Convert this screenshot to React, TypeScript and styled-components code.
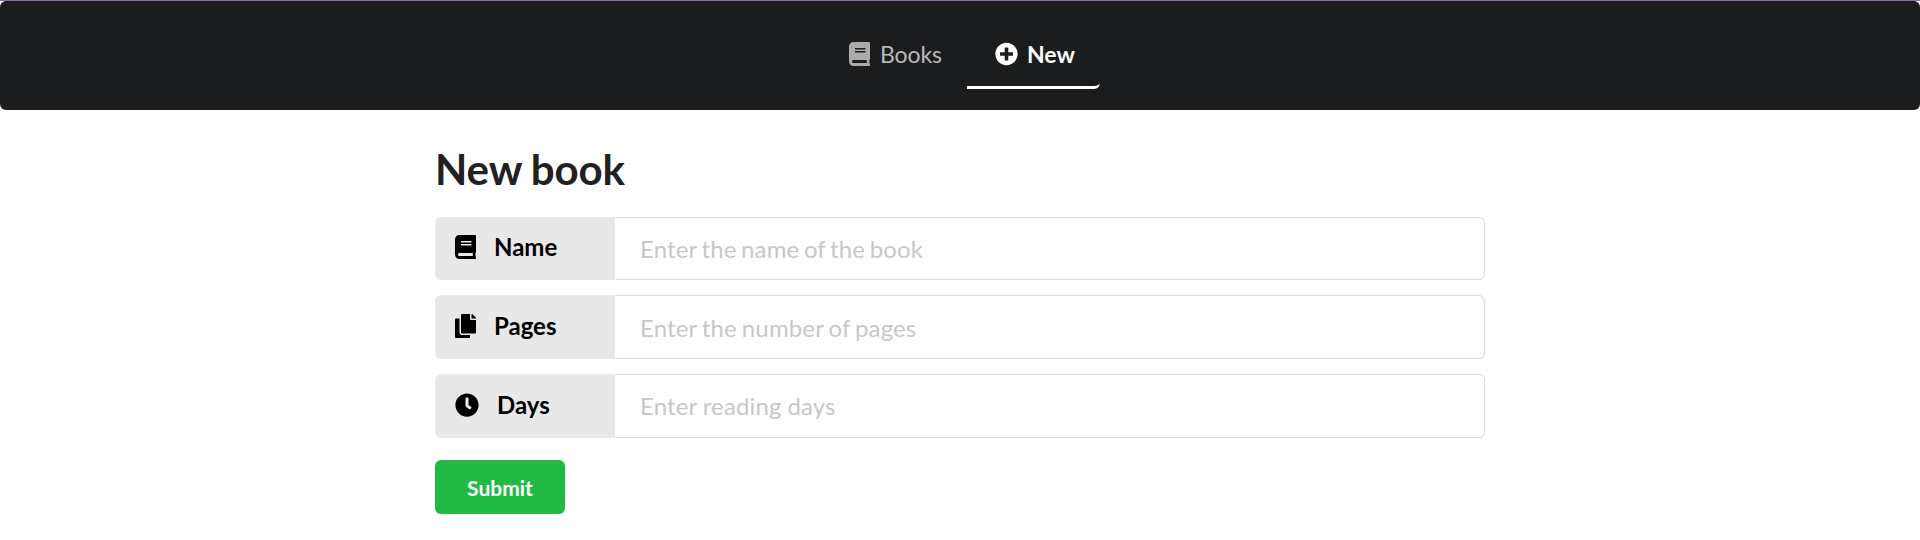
import React from "react";
import styled, { createGlobalStyle, css } from "styled-components";
import { FaBook, FaClock, FaCopy, FaPlusCircle } from "react-icons/fa";

const GlobalStyle = createGlobalStyle`
  *, *::before, *::after { box-sizing: border-box; }
  body {
    margin: 0;
    background: #fff;
    font-family: Lato, "Liberation Sans", sans-serif;
    color: #212121;
  }
  input, button { font-family: inherit; }
`;

const Page = styled.div`
  min-height: 540px;
  border-top: 1px solid #8e68b5;
`;

const TopBar = styled.header`
  display: flex;
  justify-content: center;
  height: 109px;
  padding-top: 22px;
  background: #1b1c1d;
  border-radius: 6px;
`;

const Menu = styled.nav`
  display: flex;
  height: 66px;
  width: 286px;
  border: 1px solid #1e1f20;
  border-radius: 6px;
`;

const MenuItem = styled.a<{ $active?: boolean }>`
  display: flex;
  align-items: center;
  height: 65px;
  padding: 0 0 3px 31px;
  width: 149px;
  font-size: 23px;
  line-height: 28px;
  letter-spacing: -0.1px;
  color: rgba(255, 255, 255, 0.7);
  border-bottom: 3px solid transparent;
  text-decoration: none;
  svg { width: 21px; height: 24px; margin-right: 10px; opacity: 0.9; }
  ${(p) =>
    p.$active &&
    css`
      width: 133px;
      padding-left: 28px;
      color: #fff;
      font-weight: 700;
      letter-spacing: 0;
      border-bottom-color: #fff;
      border-bottom-right-radius: 6px;
      svg { width: 23px; opacity: 1; margin-right: 9px; }
    `}
`;

const Content = styled.main`
  width: 1050px;
  margin: 0 auto;
`;

const Title = styled.h1`
  margin: 0;
  padding-top: 32px;
  height: 106.67px;
  font-size: 42px;
  line-height: 54px;
  font-weight: 700;
  letter-spacing: -0.1px;
  word-spacing: -0.8px;
`;

const Form = styled.form`
  display: flex;
  flex-direction: column;
  align-items: flex-start;
  gap: 15px;
`;

const Field = styled.div`
  display: flex;
  width: 100%;
  height: 63.67px;
`;

const Label = styled.label<{ $iconWidth: number }>`
  display: flex;
  align-items: center;
  width: 180px;
  padding: 0 0 2.4px 20px;
  background: #e8e8e8;
  border-radius: 6px 0 0 6px;
  color: #000;
  font-size: 24px;
  line-height: 30px;
  font-weight: 700;
  svg { width: ${(p) => p.$iconWidth}px; height: 24px; margin-right: 18px; }
`;

const Input = styled.input<{ $wordSpacing: number }>`
  flex: 1;
  min-width: 0;
  padding: 0 24px;
  border: 1px solid #dadadb;
  border-left-color: transparent;
  border-radius: 0 6px 6px 0;
  background: #fff;
  background-clip: padding-box;
  font-size: 24px;
  letter-spacing: 0.13px;
  word-spacing: ${(p) => p.$wordSpacing}px;
  outline: none;
  &::placeholder { color: #c7c7c7; opacity: 1; }
`;

const SubmitButton = styled.button`
  width: 130px;
  height: 54px;
  margin-top: 7px;
  padding: 1px 0 0;
  border: 0;
  border-radius: 6px;
  background: #21ba45;
  color: #fff;
  font-size: 21px;
  font-weight: 700;
`;

const fields = [
  { id: "name", label: "Name", icon: FaBook, iconWidth: 21, placeholder: "Enter the name of the book", wordSpacing: -1.7 },
  { id: "pages", label: "Pages", icon: FaCopy, iconWidth: 21, placeholder: "Enter the number of pages", wordSpacing: -1.3 },
  { id: "days", label: "Days", icon: FaClock, iconWidth: 24, placeholder: "Enter reading days", wordSpacing: -0.4 },
];

export default function App() {
  return (
    <Page>
      <GlobalStyle />
      <TopBar>
        <Menu>
          <MenuItem href="#books"><FaBook />Books</MenuItem>
          <MenuItem href="#new" $active><FaPlusCircle />New</MenuItem>
        </Menu>
      </TopBar>
      <Content>
        <Title>New book</Title>
        <Form>
          {fields.map(({ id, label, icon: Icon, iconWidth, placeholder, wordSpacing }) => (
            <Field key={id}>
              <Label htmlFor={id} $iconWidth={iconWidth}><Icon />{label}</Label>
              <Input id={id} placeholder={placeholder} $wordSpacing={wordSpacing} />
            </Field>
          ))}
          <SubmitButton type="button">Submit</SubmitButton>
        </Form>
      </Content>
    </Page>
  );
}
